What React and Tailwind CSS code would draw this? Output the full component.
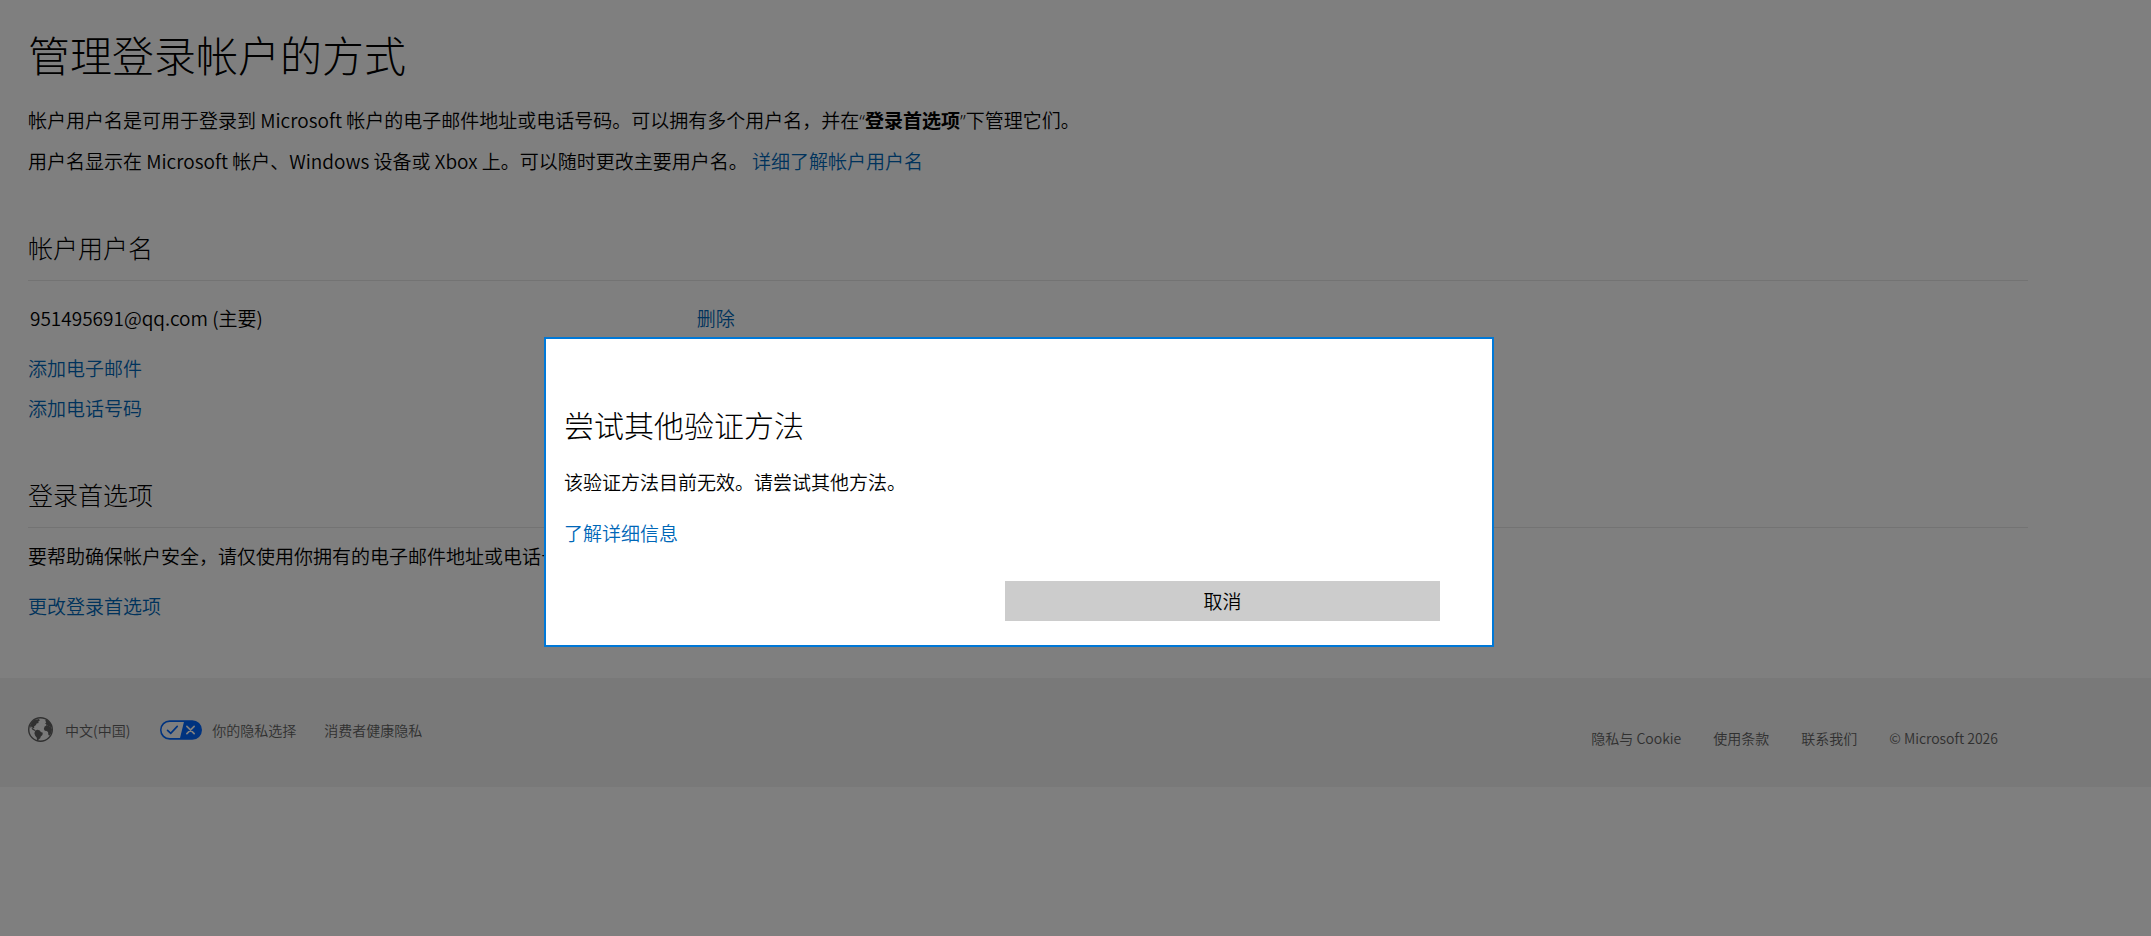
function PageLink({ children }) {
    return (
        <a href="#" className="text-[#0067b8] hover:underline">{children}</a>
    );
}

function SectionTitle({ children }) {
    return (
        <h2 className="border-b border-[#e6e6e6] pb-[15px] text-[25px] leading-9 font-light">{children}</h2>
    );
}

// Narrow quotation marks, the CJK font draws them full width
function Quoted({ children }) {
    return (
        <>
            <span className="font-['Open_Sans',sans-serif]">“</span>
            <b>{children}</b>
            <span className="font-['Open_Sans',sans-serif]">”</span>
        </>
    );
}

function GlobeIcon() {
    return (
        <svg viewBox="0 0 25 25" className="h-[25px] w-[25px]" fill="currentColor" aria-hidden="true">
            <circle cx="12.5" cy="12.5" r="11.8" fill="none" stroke="currentColor" strokeWidth="1.4" />
            {/* north america */}
            <path d="M2 8.6L4.2 4.6 7 2.4l2.2.2 1.8-.6.8 1.4-1.5 1.2.3 1.5-2 .4-.6 1.6-2 1.3.3 1.6L4.8 11 3.6 9.6 2.6 11z" />
            <path d="M3.4 10.4l2.2 1.4 1.8 1.4-.6.8-2.6-1.6z" />
            {/* south america */}
            <path d="M7.2 13.4l2.4-.6 2.2.8 1 1.4 2 .8-.4 2.2-1.6 1.4-.6 1.8-1.6 1.2-.6 1.7-1-.4-.2-3-1.6-2-.8-2.4z" />
            {/* europe and africa */}
            <path d="M17.2 3.6l1.4-1.2 3 2.6 2.2 4-.2 1.4-2-.8-1.6.4-.4-1.4-1.8.2.6-1.6-1.4-.8 1.2-1z" />
            <path d="M16.6 9.6l2-1.2 2.2.6 2.2 1.2 1 2.2-.6 3.4-1.8 3-1.2-.8-.4-3-1.4-.9-1.8-.3-1-1.8z" />
        </svg>
    );
}

function PrivacyChoicesIcon() {
    return (
        <svg viewBox="0 0 30 14" className="h-5 w-[42px]" aria-hidden="true">
            <path d="M7 0.5h16a6.5 6.5 0 0 1 0 13H7a6.5 6.5 0 0 1 0-13z" fill="#fff" />
            <path d="M7 0a7 7 0 0 0 0 14h16a7 7 0 0 0 0-14H7zM1.1 7A5.9 5.9 0 0 1 7 1.2h10.1L14.3 12.8H7A5.9 5.9 0 0 1 1.1 7z" fill="#06f" fillRule="evenodd" />
            <path d="M5.4 7.2l2.3 2.2 4.6-5" fill="none" stroke="#06f" strokeWidth="1.2" strokeLinecap="round" />
            <path d="M19.2 4.4l5.2 5.2M24.4 4.4l-5.2 5.2" fill="none" stroke="#fff" strokeWidth="1.2" strokeLinecap="round" />
        </svg>
    );
}

function SignInPage() {
    return (
        <main className="pt-[26px] pr-[123px] pb-[58px] pl-7">
            <h1 className="text-[42px] leading-14 font-extralight">管理登录帐户的方式</h1>
            <p className="mt-6">
                帐户用户名是可用于登录到 Microsoft 帐户的电子邮件地址或电话号码。可以拥有多个用户名，并在<Quoted>登录首选项</Quoted>下管理它们。
            </p>
            <p className="mt-3">
                用户名显示在 Microsoft 帐户、Windows 设备或 Xbox 上。可以随时更改主要用户名。 <PageLink>详细了解帐户用户名</PageLink>
            </p>

            <section className="mt-[54px]">
                <SectionTitle>帐户用户名</SectionTitle>
                <table className="mt-[21px] w-full">
                    <tbody>
                        <tr>
                            <td className="w-1/3 p-0.5">951495691@qq.com (主要)</td>
                            <td className="p-0.5"><PageLink>删除</PageLink></td>
                        </tr>
                    </tbody>
                </table>
                <p className="mt-5"><PageLink>添加电子邮件</PageLink></p>
                <p className="mt-3"><PageLink>添加电话号码</PageLink></p>
            </section>

            <section className="mt-[54px]">
                <SectionTitle>登录首选项</SectionTitle>
                <p className="mt-3.5">要帮助确保帐户安全，请仅使用你拥有的电子邮件地址或电话号码登录。</p>
                <p className="mt-[22px]"><PageLink>更改登录首选项</PageLink></p>
            </section>
        </main>
    );
}

function Footer() {
    return (
        <footer className="flex h-[109px] items-center justify-between bg-[#f2f2f2] pr-[153px] pl-7 text-[14px] leading-5 text-[#616161]">
            <div className="flex items-center pb-1.5">
                <a href="#" className="flex items-center gap-3">
                    <GlobeIcon />
                    <span>中文(中国)</span>
                </a>
                <a href="#" className="ml-[30px] flex items-center gap-2.5">
                    <PrivacyChoicesIcon />
                    <span>你的隐私选择</span>
                </a>
                <a href="#" className="ml-7">消费者健康隐私</a>
            </div>
            <div className="flex gap-8 pt-2.5">
                <a href="#">隐私与 Cookie</a>
                <a href="#">使用条款</a>
                <a href="#">联系我们</a>
                <span>© Microsoft 2026</span>
            </div>
        </footer>
    );
}

function VerifyDialog() {
    return (
        <div className="fixed inset-0 flex items-center justify-center bg-black/50 pt-12 pr-[113px]">
            <div role="dialog" aria-modal="true" aria-labelledby="dialog-title" className="w-[950px] max-w-full border-2 border-[#0078d7] bg-white pt-[61px] pr-13 pb-6 pl-[18px]">
                <h2 id="dialog-title" className="text-[30px] leading-12 font-extralight">尝试其他验证方法</h2>
                <p className="mt-5">该验证方法目前无效。请尝试其他方法。</p>
                <p className="mt-[23px]"><PageLink>了解详细信息</PageLink></p>
                <div className="mt-[34px] flex justify-end">
                    <button type="button" className="h-10 w-[435px] bg-[#ccc]">取消</button>
                </div>
            </div>
        </div>
    );
}

export default function App() {
    return (
        <div lang="zh-CN" className="min-h-screen bg-white font-['Noto_Sans_CJK_SC',sans-serif] text-[19px] leading-7 font-[350] text-black">
            <SignInPage />
            <Footer />
            <VerifyDialog />
        </div>
    );
}
